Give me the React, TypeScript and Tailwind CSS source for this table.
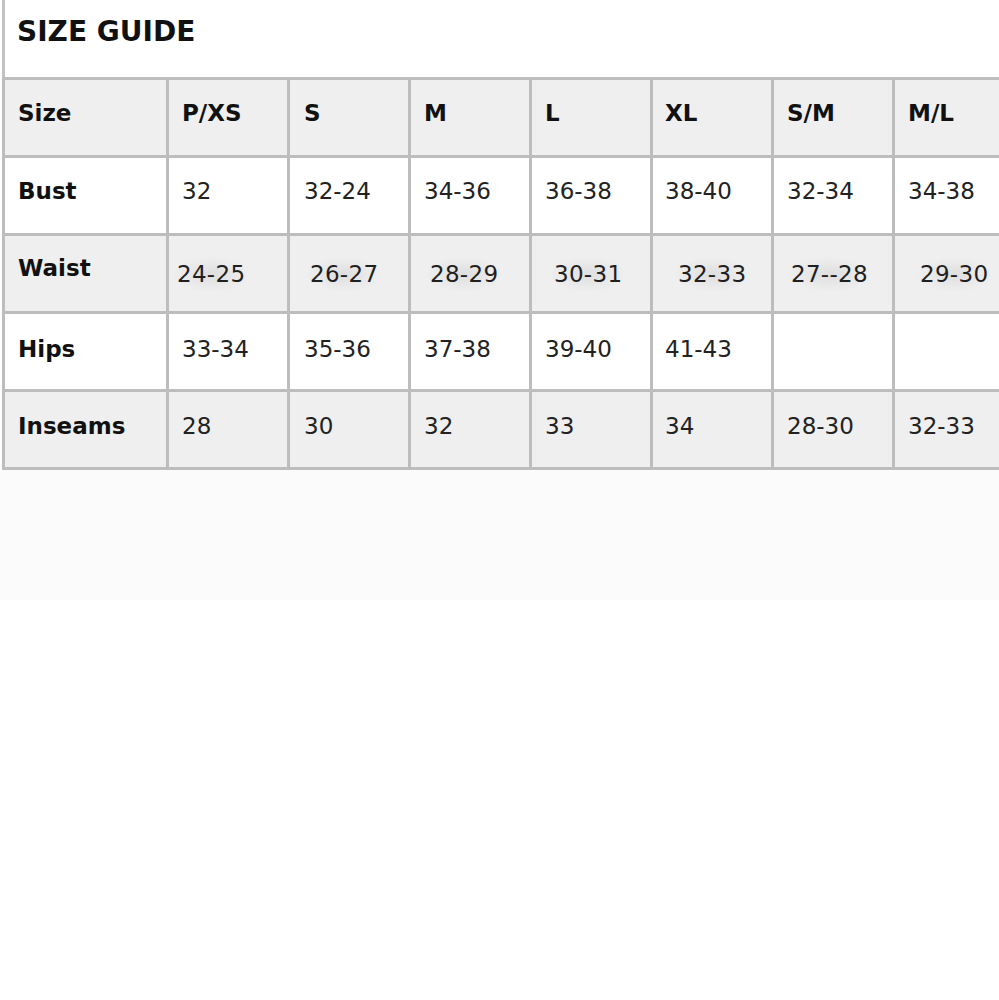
const columns = ["P/XS", "S", "M", "L", "XL", "S/M", "M/L"];

type Row = {
  label: string;
  values: string[];
  shade: boolean;
  smudge?: boolean;
};

const rows: Row[] = [
  { label: "Bust", values: ["32", "32-24", "34-36", "36-38", "38-40", "32-34", "34-38"], shade: false },
  { label: "Waist", values: ["24-25", "26-27", "28-29", "30-31", "32-33", "27--28", "29-30"], shade: true, smudge: true },
  { label: "Hips", values: ["33-34", "35-36", "37-38", "39-40", "41-43", "", ""], shade: false },
  { label: "Inseams", values: ["28", "30", "32", "33", "34", "28-30", "32-33"], shade: true },
];

// per-column left padding, taken from where the text sits in each cell
const headPad = ["pl-[13px]", "pl-[14px]", "pl-[13px]", "pl-[13px]", "pl-[12px]", "pl-[13px]", "pl-[13px]"];
const waistPad = ["pl-[4px]", "pl-[16px]", "pl-[15px]", "pl-[18px]", "pl-[21px]", "pl-[13px]", "pl-[21px]"];

const rowNudge: Record<string, string> = {
  Bust: "pb-[9px]",
  Waist: "pb-[10px]",
  Hips: "pb-[5px]",
  Inseams: "pb-[6px]",
};

function Cell({
  children,
  shade,
  className = "",
}: {
  children?: React.ReactNode;
  shade: boolean;
  className?: string;
}) {
  return (
    <div
      className={`flex h-[75px] items-center ${shade ? "bg-[#efefef]" : "bg-white"} ${className}`}
    >
      {children}
    </div>
  );
}

export default function App() {
  return (
    <main
      className="min-h-[1000px] w-[999px] overflow-hidden bg-white"
      style={{ fontFamily: '"DejaVu Sans", Verdana, sans-serif' }}
    >
      <div className="ml-[2px] w-[1020px]">
        <div className="h-[77px] border-l-[3px] border-[#c2c2c2] bg-white pl-[12px] pt-[18px]">
          <h1 className="text-[28px] font-bold leading-[28px] text-[#111]">SIZE GUIDE</h1>
        </div>

        <div className="grid grid-cols-[161px_repeat(7,118px)] gap-[3px] bg-[#bdbdbd] p-[3px] pr-0">
          <Cell shade className="pb-[9px] pl-[13px]">
            <span className="text-[23px] font-bold leading-[23px] text-[#111]">Size</span>
          </Cell>
          {columns.map((c, i) => (
            <Cell key={c} shade className={`pb-[9px] ${headPad[i]}`}>
              <span className="text-[23px] font-bold leading-[23px] text-[#111]">{c}</span>
            </Cell>
          ))}

          {rows.map((row) => (
            <div key={row.label} className="contents">
              <Cell shade={row.shade} className={`pl-[13px] ${rowNudge[row.label]}`}>
                <span className="text-[23px] font-bold leading-[23px] text-[#111]">{row.label}</span>
              </Cell>
              {row.values.map((v, i) => (
                <Cell
                  key={i}
                  shade={row.shade}
                  className={row.smudge ? `${waistPad[i]} pt-[2px]` : `${headPad[i]} ${rowNudge[row.label]}`}
                >
                  {row.smudge ? (
                    <span className="rounded-full bg-[radial-gradient(ellipse_at_center,#dedede_0%,#e8e8e8_40%,transparent_72%)] px-[4px] py-[6px] text-[23px] leading-[23px] tracking-[0.3px] text-[#1f1f1f]">
                      {v}
                    </span>
                  ) : (
                    <span className="text-[23px] leading-[23px] text-[#222]">{v}</span>
                  )}
                </Cell>
              ))}
            </div>
          ))}
        </div>
      </div>
      <div className="h-[130px] w-full bg-[#fbfbfb]" />
    </main>
  );
}
